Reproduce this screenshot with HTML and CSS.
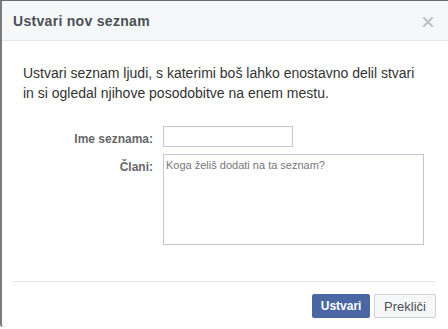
FILE: index.html
```html
<!DOCTYPE html>
<html>
<head>
<meta charset="utf-8">
<link rel="stylesheet" href="styles.css">
</head>
<body>
<div class="dialog">
  <div class="header">
    <span class="title">Ustvari nov seznam</span>
    <span class="close" aria-label="Zapri">
      <svg width="10" height="10" viewBox="0 0 10 10"><path d="M1 1L9 9M9 1L1 9" stroke="#bcc0c7" stroke-width="2.2" stroke-linecap="square"/></svg>
    </span>
  </div>
  <div class="body">
    <p class="intro">Ustvari seznam ljudi, s katerimi boš lahko enostavno delil stvari in si ogledal njihove posodobitve na enem mestu.</p>
    <div class="form">
      <label class="label">Ime seznama:</label>
      <input class="input" type="text">
      <label class="label">Člani:</label>
      <textarea class="textarea" placeholder="Koga želiš dodati na ta seznam?"></textarea>
    </div>
  </div>
  <div class="footer">
    <button class="btn primary">Ustvari</button>
    <button class="btn">Prekliči</button>
  </div>
</div>
</body>
</html>
```

FILE: styles.css
```css
html, body {
  margin: 0;
  padding: 0;
  background: #ffffff;
}
body {
  width: 448px;
  height: 329px;
  overflow: hidden;
  font-family: "Liberation Sans", Arial, sans-serif;
}
.dialog {
  width: 446px;
  height: 326px;
  border-top: 1px solid #6a6a6a;
  border-left: 2px solid #7a7a7a;
  border-bottom-left-radius: 3px;
  background: #fff;
  display: flex;
  flex-direction: column;
}
.header {
  height: 39px;
  background: #f6f7f9;
  border-bottom: 1px solid #e5e5e5;
  display: flex;
  align-items: center;
  justify-content: space-between;
  padding: 0 15px 0 11px;
}
.title {
  font-weight: bold;
  font-size: 14px;
  letter-spacing: 0.3px;
  color: #4b4f56;
  padding-top: 1px;
}
.close {
  display: flex;
  padding-top: 3px;
}
.body {
  padding: 22px 21px 0 21px;
  flex: 1;
}
.intro {
  margin: 0;
  font-size: 14px;
  line-height: 20px;
  color: #333;
}
.form {
  margin-top: 23px;
  display: grid;
  grid-template-columns: 130px auto;
  column-gap: 10px;
  row-gap: 7px;
  align-items: start;
  justify-items: start;
}
.label {
  justify-self: end;
  font-size: 12px;
  font-weight: bold;
  color: #666;
  line-height: 14px;
  padding-top: 6px;
}
.input {
  box-sizing: border-box;
  width: 130px;
  height: 21px;
  border: 1px solid #bdc7d8;
  margin: 0;
  padding: 2px;
}
.textarea {
  box-sizing: border-box;
  width: 261px;
  height: 91px;
  border: 1px solid #bdc7d8;
  margin: 0;
  padding: 3px 2px;
  resize: none;
  font-family: "Liberation Sans", Arial, sans-serif;
  font-size: 11px;
  line-height: 14px;
}
.textarea::placeholder {
  color: #777;
  opacity: 1;
}
.footer {
  margin: 0 12px 0 11px;
  border-top: 1px solid #e5e5e5;
  padding: 12px 0 9px;
  display: flex;
  justify-content: flex-end;
  gap: 4px;
}
.btn {
  box-sizing: border-box;
  height: 24px;
  padding: 0 9px;
  font-family: "Liberation Sans", Arial, sans-serif;
  font-size: 13px;
  font-weight: normal;
  color: #4b4f56;
  background: #f6f7f9;
  border: 1px solid #ced0d4;
  border-radius: 2px;
}
.btn.primary {
  background: #4a67a3;
  border-color: #4a67a3;
  color: #fff;
  font-weight: bold;
  font-size: 12px;
  width: 58px;
  padding: 0;
}
```
